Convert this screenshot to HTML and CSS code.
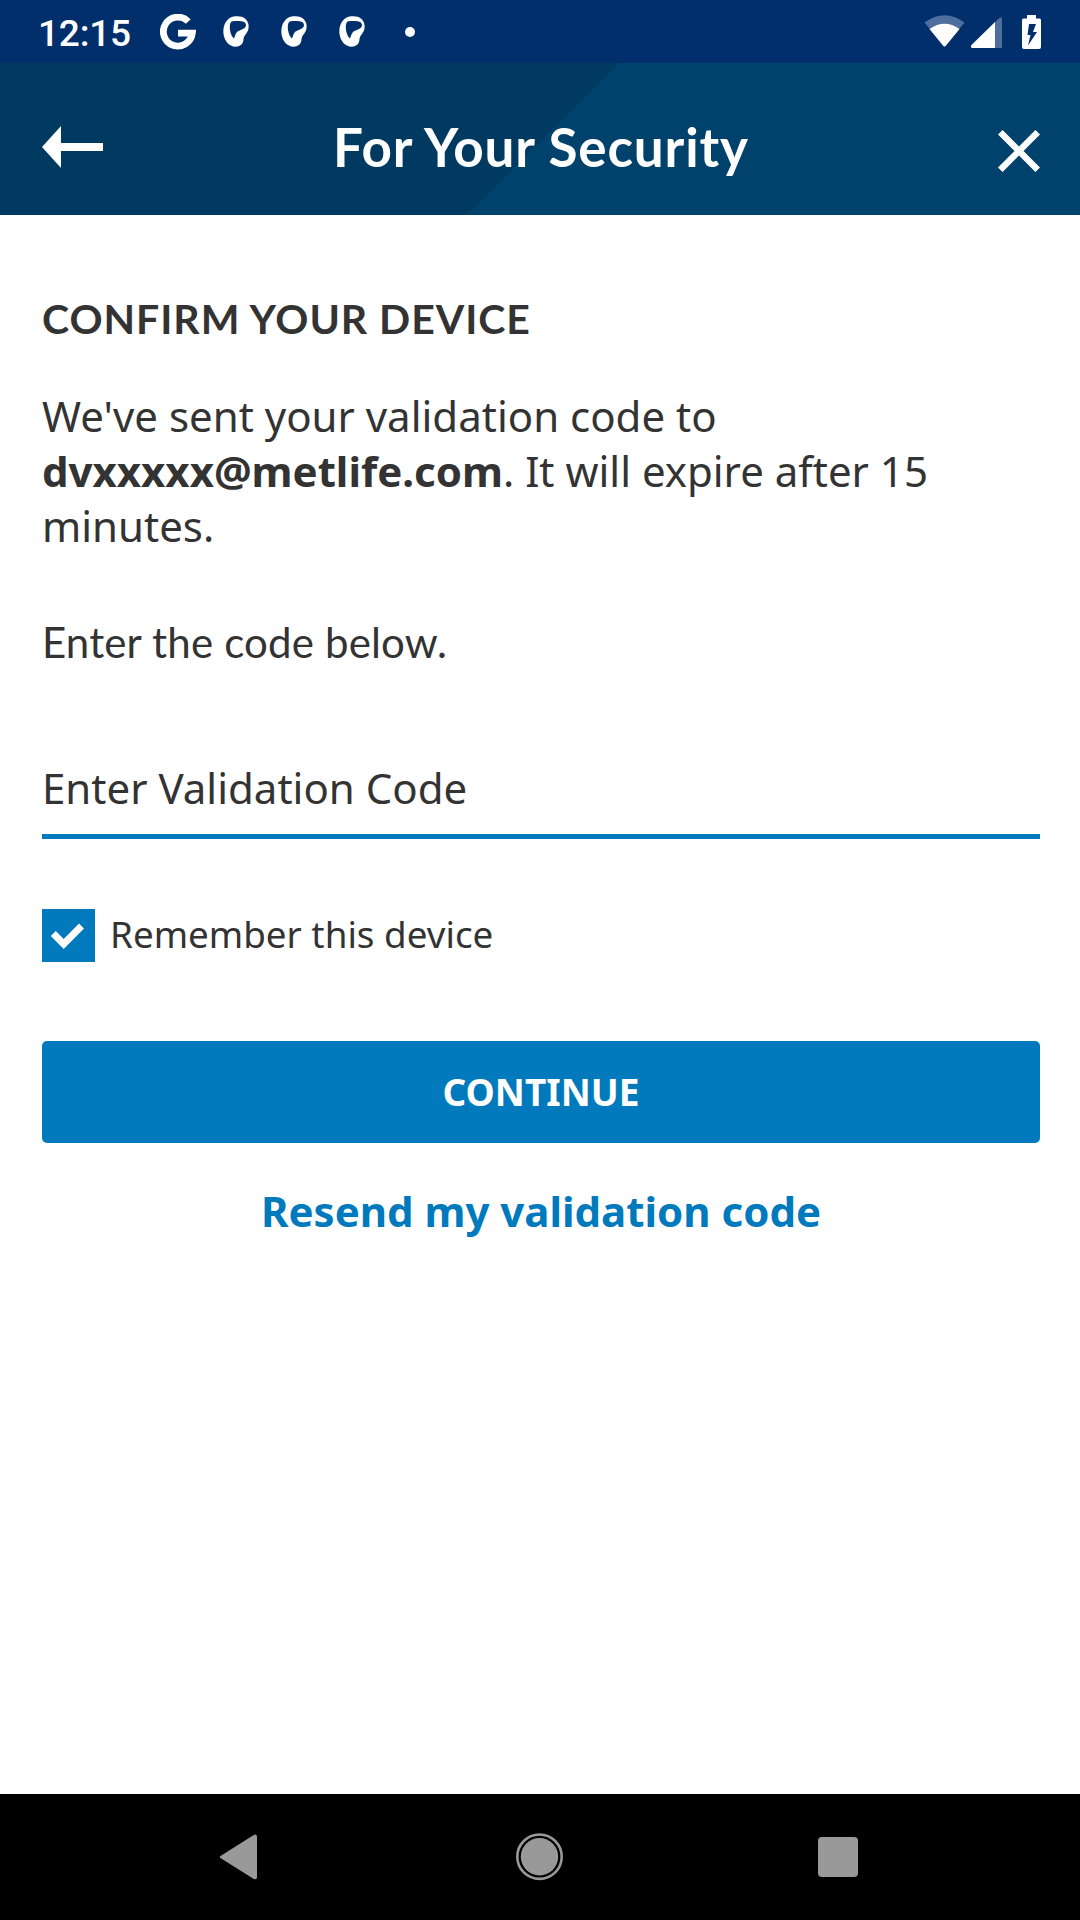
FILE: index.html
```html
<!DOCTYPE html>
<html lang="en">
<head>
<meta charset="utf-8">
<title>For Your Security</title>
<link rel="stylesheet" href="styles.css">
</head>
<body>
<svg class="defs" width="0" height="0">
  <defs>
    <symbol id="app-badge" viewBox="0 0 26 31">
      <path fill="#fff" fill-rule="evenodd" d="M12 .3C16 0 20 .3 22.500 3C25.500 6 26 9 25.400 13C24.500 17 21 19.500 20.500 23C20.500 28 17 30.700 12.500 30.700C6 30.500 1.500 25 .5 18C-.5 9 4 1 12 .3ZM8.500 5.500C7 7 6.500 10 7 14C7.600 18 9 21 11 22.500C12 20 12.500 17.500 14.500 15.500C17 14 22.500 13 23 9.500C23 7 21.500 5.500 18.500 5.200C15 5.100 11.500 5 8.500 5.500Z"/>
    </symbol>
  </defs>
</svg>
<div class="screen">
  <div class="status-bar">
    <span class="clock">12:15</span>
    <svg class="google" width="36" height="36" viewBox="0 0 36 36"><path fill="none" stroke="#fff" stroke-width="6.800" d="M28.300 7.500A14.500 14.500 0 1 0 32.300 19.200H18"/></svg>
    <div class="badges">
      <svg width="26" height="31"><use href="#app-badge"/></svg>
      <svg width="26" height="31"><use href="#app-badge"/></svg>
      <svg width="26" height="31"><use href="#app-badge"/></svg>
    </div>
    <span class="dot"></span>
    <svg class="signals" width="118" height="36" viewBox="924 13 118 36">
      <path fill="#4d6e9e" d="M924.500 21.500Q944.500 7 964.500 21.500L946 44.500Q944.500 46.500 943 44.500Z"/>
      <path fill="#fff" d="M929.500 28Q944.500 17.500 959.500 28L946 44.500Q944.500 46.500 943 44.500Z"/>
      <path fill="#4d6e9e" d="M995 21L1000 16.500Q1002 15.500 1002 18V47H995Z"/>
      <path fill="#fff" d="M995 21V47H972Q970 46 971.500 44Z"/>
      <path fill="#fff" fill-rule="evenodd" d="M1027 14H1036V17.500H1039.500Q1041 17.500 1041 19V46Q1041 48 1039 48H1024Q1022 48 1022 46V19Q1022 17.500 1023.500 17.500H1027ZM1029 23L1027.500 34H1030.500L1028 44.500L1037 31H1033L1036 23Z"/>
    </svg>
  </div>
  <header class="header">
    <svg width="62" height="42" viewBox="0 0 62 42"><path fill="#fff" d="M0 21L19 0V17H61V25H19V42Z"/></svg>
    <h1>For Your Security</h1>
    <svg class="close" width="42" height="42" viewBox="0 0 42 42"><path fill="none" stroke="#fff" stroke-width="6.500" d="M2.300 2.300L39.700 39.700M39.700 2.300L2.300 39.700"/></svg>
  </header>
  <main class="content">
    <h2>CONFIRM YOUR DEVICE</h2>
    <p class="message">We've sent your validation code to <b>dvxxxxx@metlife.com</b>. It will expire after 15 minutes.</p>
    <p class="hint">Enter the code below.</p>
    <div class="field">Enter Validation Code</div>
    <label class="remember">
      <svg width="53" height="53" viewBox="0 0 53 53"><path fill="#007abc" d="M0 0H53V53H0Z"/><path fill="none" stroke="#fff" stroke-width="7" d="M11.300 24.500L21.700 35L39.500 17"/></svg>
      <span>Remember this device</span>
    </label>
    <button class="continue">CONTINUE</button>
    <a class="resend">Resend my validation code</a>
  </main>
  <nav class="nav-bar">
    <svg width="642" height="48" viewBox="219 1833 642 48">
      <path fill="#999" stroke="#999" stroke-width="4" stroke-linejoin="round" d="M222 1857L255 1832.500V1881.500Z" transform="translate(0 297.100) scale(1 .84)"/>
      <circle cx="539.500" cy="1856.700" r="22.200" fill="none" stroke="#999" stroke-width="2.600"/>
      <circle cx="539.500" cy="1856.700" r="18.700" fill="#999"/>
      <rect x="818" y="1837" width="40" height="40" rx="4" fill="#999"/>
    </svg>
  </nav>
</div>
</body>
</html>
```
FILE: styles.css
```css
* { box-sizing: border-box; }
body { margin: 0; background: #fff; }
.defs { display: none; }
h1, h2, p { margin: 0; }
.screen {
  width: 1080px;
  height: 1920px;
  display: flex;
  flex-direction: column;
  font-family: "Noto Sans", sans-serif;
  color: #333;
}
.status-bar {
  height: 63px;
  padding: 0 38px 0 38px;
  display: flex;
  align-items: center;
  background: #002f6c;
  color: #fff;
}
.clock {
  width: 94px;
  font: 500 37px/44px Roboto, sans-serif;
  letter-spacing: -0.2px;
  white-space: nowrap;
  padding-top: 4px;
}
.google { margin-left: 28px; }
.badges { display: flex; gap: 32px; margin-left: 27px; }
.dot { width: 10px; height: 10px; border-radius: 50%; background: #fff; margin-left: 40px; }
.signals { margin-left: auto; }
.header {
  height: 152px;
  padding: 0 40px 0 42px;
  display: flex;
  align-items: center;
  justify-content: space-between;
  background: linear-gradient(135deg, #003a61 0 437px, #00426b 437px);
}
.header > svg { margin-top: 15px; }
.header > .close { margin-top: 23px; }
.header h1 {
  font: 700 53px/64px Lato, sans-serif;
  letter-spacing: 0.85px;
  color: #fff;
  margin: 16px 20px 0 0;
}
.content {
  flex: 1;
  padding: 79px 40px 0 42px;
  display: flex;
  flex-direction: column;
}
h2 {
  font: 700 41px/50px Lato, sans-serif;
  letter-spacing: 0.95px;
  white-space: nowrap;
}
.message { font-size: 42px; line-height: 55px; margin-top: 44px; }
.hint {
  font: 400 42px/56px Lato, sans-serif;
  letter-spacing: 0.17px;
  margin-top: 61px;
}
.field {
  height: 108px;
  margin-top: 61px;
  padding-top: 27px;
  font-size: 42px;
  line-height: 60px;
  border-bottom: 5px solid #007abc;
}
.remember {
  display: flex;
  align-items: center;
  gap: 15px;
  margin-top: 70px;
  height: 53px;
  font-size: 36.8px;
}
.remember span { margin-top: -4px; }
.continue {
  height: 102px;
  margin-top: 79px;
  border: 0;
  border-radius: 5px;
  background: #007abc;
  color: #fff;
  font: 700 37px/50px "Noto Sans", sans-serif;
}
.resend {
  margin-top: 40px;
  text-align: center;
  color: #007abc;
  font-size: 42px;
  font-weight: 700;
  line-height: 56px;
}
.nav-bar {
  height: 126px;
  display: flex;
  align-items: center;
  justify-content: center;
  background: #000;
}
```
